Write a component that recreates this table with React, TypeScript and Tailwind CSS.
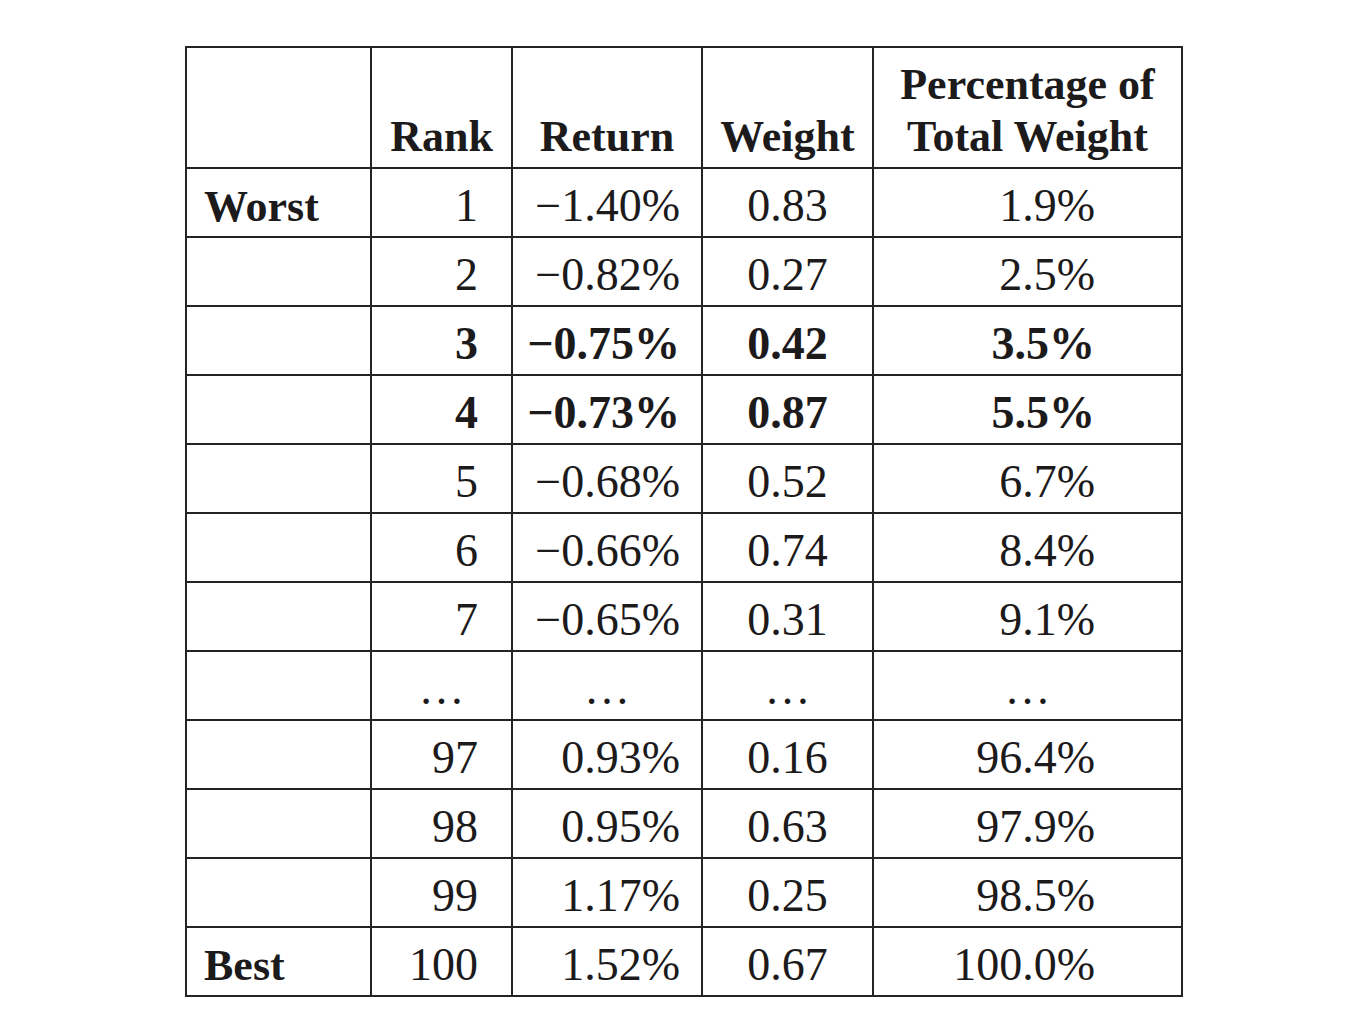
import React from "react";

type Row = {
  label?: string;
  rank: string;
  ret: string;
  weight: string;
  pct: string;
  bold?: boolean;
  dots?: boolean;
};

const rows: Row[] = [
  { label: "Worst", rank: "1", ret: "−1.40%", weight: "0.83", pct: "1.9%" },
  { rank: "2", ret: "−0.82%", weight: "0.27", pct: "2.5%" },
  { rank: "3", ret: "−0.75%", weight: "0.42", pct: "3.5%", bold: true },
  { rank: "4", ret: "−0.73%", weight: "0.87", pct: "5.5%", bold: true },
  { rank: "5", ret: "−0.68%", weight: "0.52", pct: "6.7%" },
  { rank: "6", ret: "−0.66%", weight: "0.74", pct: "8.4%" },
  { rank: "7", ret: "−0.65%", weight: "0.31", pct: "9.1%" },
  { rank: "…", ret: "…", weight: "…", pct: "…", dots: true },
  { rank: "97", ret: "0.93%", weight: "0.16", pct: "96.4%" },
  { rank: "98", ret: "0.95%", weight: "0.63", pct: "97.9%" },
  { rank: "99", ret: "1.17%", weight: "0.25", pct: "98.5%" },
  { label: "Best", rank: "100", ret: "1.52%", weight: "0.67", pct: "100.0%" },
];

const serif = { fontFamily: '"Liberation Serif", "Times New Roman", serif' };

export default function App() {
  return (
    <div className="w-[1364px] h-[1030px] bg-white text-[#1c1a1b]" style={serif}>
      <div className="pt-[46px] pl-[185px]">
        <div className="grid w-[998px] grid-cols-[183px_139px_188px_169px_307px] gap-[2px] bg-[#262324] p-[2px]">
          {/* header */}
          <div className="h-[119px] bg-white" />
          <div className="flex h-[119px] flex-col justify-end bg-white pb-[4px] text-center text-[44px] font-bold leading-[52px]">
            Rank
          </div>
          <div className="flex h-[119px] flex-col justify-end bg-white pb-[4px] text-center text-[44px] font-bold leading-[52px]">
            Return
          </div>
          <div className="flex h-[119px] flex-col justify-end bg-white pb-[4px] text-center text-[44px] font-bold leading-[52px]">
            Weight
          </div>
          <div className="flex h-[119px] flex-col justify-end bg-white pb-[4px] text-center text-[44px] font-bold leading-[52px]">
            <div>Percentage of</div>
            <div>Total Weight</div>
          </div>

          {rows.map((r, i) => {
            const w = r.bold ? "font-bold" : "font-normal";
            return (
              <React.Fragment key={i}>
                <div className="h-[67px] bg-white pl-[17px] pt-[15px] text-[44px] font-bold leading-[46px]">
                  {r.label ?? ""}
                </div>
                <div
                  className={`h-[67px] bg-white pt-[14px] text-[46px] leading-[46px] ${w} ${
                    r.dots ? "text-center" : "text-right pr-[33px]"
                  }`}
                >
                  {r.rank}
                </div>
                <div
                  className={`h-[67px] bg-white pt-[14px] text-[46px] leading-[46px] ${w} ${
                    r.dots ? "text-center" : "text-right pr-[21px]"
                  }`}
                >
                  {r.ret}
                </div>
                <div className={`h-[67px] bg-white pt-[14px] text-center text-[46px] leading-[46px] ${w}`}>
                  {r.weight}
                </div>
                <div
                  className={`h-[67px] bg-white pt-[14px] text-[46px] leading-[46px] ${w} ${
                    r.dots ? "text-center" : "text-right pr-[86px]"
                  }`}
                >
                  {r.pct}
                </div>
              </React.Fragment>
            );
          })}
        </div>
      </div>
    </div>
  );
}
